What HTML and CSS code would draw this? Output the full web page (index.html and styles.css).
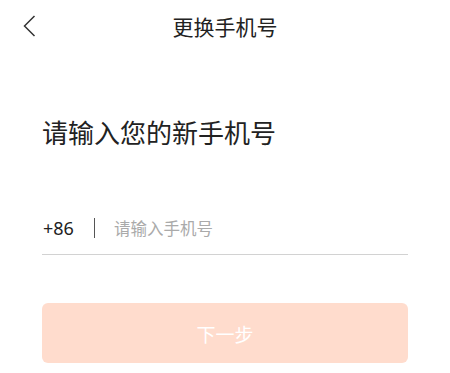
FILE: index.html
```html
<!DOCTYPE html>
<html lang="zh">
<head>
<meta charset="utf-8">
<link rel="stylesheet" href="styles.css">
</head>
<body>
<div class="page">
  <header class="nav">
    <span class="back">
      <svg width="14" height="22" viewBox="0 0 14 22"><path d="M11.5 1 L1.5 11 L11.5 21" fill="none" stroke="#333" stroke-width="1.5"/></svg>
    </span>
    <h1 class="title">更换手机号</h1>
  </header>
  <main class="content">
    <h2 class="heading">请输入您的新手机号</h2>
    <div class="phone-row">
      <span class="code">+86</span>
      <span class="sep"></span>
      <span class="placeholder">请输入手机号</span>
    </div>
    <button class="next">下一步</button>
  </main>
</div>
</body>
</html>
```
FILE: styles.css
```css
html, body {
  margin: 0;
  padding: 0;
  background: #fff;
}
body {
  font-family: "Noto Sans CJK SC", "Noto Sans", sans-serif;
  color: #222;
}
.page {
  width: 450px;
}
.nav {
  height: 52px;
  display: flex;
  align-items: center;
  justify-content: center;
  position: relative;
}
.back {
  position: absolute;
  left: 23px;
  top: 15px;
  display: flex;
}
.title {
  margin: 0;
  font-size: 21px;
  font-weight: 400;
  line-height: 52px;
  color: #222;
}
.content {
  padding: 0 42px;
}
.heading {
  margin: 62px 0 0 0;
  font-size: 26px;
  font-weight: 400;
  line-height: 36px;
  color: #222;
}
.phone-row {
  margin-top: 56px;
  height: 44px;
  padding-bottom: 4px;
  display: flex;
  align-items: center;
  border-bottom: 1px solid #d2d2d2;
}
.code {
  font-size: 18px;
  color: #222;
  font-family: "Noto Sans", sans-serif;
  padding-left: 1px;
}
.sep {
  width: 1px;
  height: 20px;
  background: #555;
  margin: 0 19px 0 20px;
}
.placeholder {
  font-size: 16.5px;
  color: #aaa;
}
.next {
  display: block;
  width: 100%;
  height: 60px;
  margin-top: 48px;
  border: none;
  border-radius: 6px;
  background: #ffdccd;
  color: #fff;
  font-family: "Noto Sans CJK SC", sans-serif;
  font-size: 19px;
  padding: 0;
}
```
